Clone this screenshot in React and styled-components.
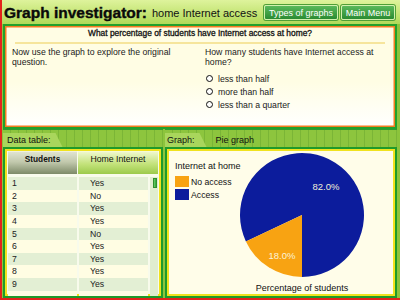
import styled, { createGlobalStyle } from "styled-components";

const GlobalStyle = createGlobalStyle`
  html, body { margin: 0; padding: 0; background: #fff; }
  body { font-family: "Liberation Sans", Arial, sans-serif; }
  * { box-sizing: border-box; }
`;

const FONT = `"Liberation Sans", Arial, sans-serif`;

const Frame = styled.div`
  width: 400px;
  height: 300px;
  display: flex;
  flex-direction: column;
  background: #8cc43c;
  border-left: 2px solid #e3241b;
  border-bottom: 2px solid #e3241b;
  overflow: hidden;
  font-family: ${FONT};
  color: #1a1a1a;
`;

const Header = styled.header`
  height: 24px;
  flex: none;
  display: flex;
  align-items: center;
  padding: 1px 5px 0 2px;
  background: linear-gradient(#def39c, #b1da58);
`;

const Title = styled.h1`
  margin: 0;
  font-size: 15.5px;
  font-weight: 700;
  color: #0a0a0a;
  white-space: nowrap;
  -webkit-text-stroke: 0.4px #0a0a0a;
`;

const Subtitle = styled.span`
  font-size: 11px;
  margin-left: 5px;
  color: #111;
  white-space: nowrap;
`;

const NavButtons = styled.nav`
  margin-left: auto;
  display: flex;
  gap: 3px;
`;

const NavButton = styled.button`
  width: ${(p) => p.$w}px;
  height: 15px;
  padding: 0;
  font-family: ${FONT};
  font-size: 9px;
  color: #fff;
  background: linear-gradient(#5ab85a, #2a8b32);
  border: 1px solid #d2f0ae;
  border-radius: 2px;
  box-shadow: 0 0 0 1px #4f9f36;
`;

const QuestionPanel = styled.section`
  flex: none;
  height: 105px;
  margin: 0 3px 0 1px;
  border: 2px solid #22a02c;
  box-shadow: inset 0 0 0 1.5px #f47c20;
  background: linear-gradient(#fffde4 55%, #ffffff);
`;

const QuestionTitle = styled.h2`
  margin: 0;
  padding-top: 1px;
  font-size: 8.4px;
  line-height: 12px;
  font-weight: 400;
  -webkit-text-stroke: 0.3px #111;
  text-align: center;
  color: #111;
`;

const Rule = styled.div`
  height: 2px;
  margin: 3px 10px 0;
  background: #f6e59c;
`;

const Columns = styled.div`
  display: grid;
  grid-template-columns: 1fr 1fr;
  gap: 10px;
  padding: 0 7px;
  margin-top: 3px;
  font-size: 8.7px;
  line-height: 10px;
`;

const Para = styled.p`
  margin: 0;
`;

const Options = styled.ul`
  list-style: none;
  margin: 5px 0 0;
  padding: 0 0 0 1px;
`;

const Option = styled.li`
  height: 13px;
  display: flex;
  align-items: center;
  gap: 5px;
`;

const Radio = styled.span`
  width: 7px;
  height: 7px;
  border-radius: 50%;
  border: 1.3px solid #111;
  background: #fff;
  flex: none;
`;

const Workspace = styled.div`
  flex: 1;
  min-height: 0;
  display: flex;
  gap: 2px;
  padding: 0 3px 0 1px;
`;

const Pane = styled.section`
  display: flex;
  flex-direction: column;
  ${(p) => (p.$width ? `width: ${p.$width}px; flex: none;` : "flex: 1;")}
`;

const TabStrip = styled.div`
  height: 18px;
  flex: none;
  display: flex;
  align-items: flex-end;
  border-top: 1px solid #2f9a2e;
  background:
    repeating-linear-gradient(90deg, transparent 0 7px, rgba(40, 110, 20, 0.18) 7px 8px),
    #8dc53e;
`;

const Tab = styled.div`
  height: 14px;
  line-height: 14px;
  padding: 0 12px 0 ${(p) => p.$pad}px;
  font-size: 9px;
  color: #111;
  background: #a9d65c;
  clip-path: polygon(0 0, calc(100% - 7px) 0, 100% 100%, 0 100%);
`;

const TabNote = styled.span`
  margin-left: 9px;
  line-height: 14px;
  font-size: 9px;
  color: #111;
`;

const Box = styled.div`
  flex: 1;
  min-height: 0;
  border: 2px solid #1f9a2a;
  box-shadow: inset 0 0 0 2px #f0e21e;
  padding: ${(p) => p.$pad};
  background: ${(p) => p.$bg};
  overflow: hidden;
`;

const TableHead = styled.div`
  display: grid;
  grid-template-columns: 69px 80px;
  gap: 1px;
  height: 23px;
`;

const HeadCell = styled.div`
  padding-top: 2px;
  text-align: center;
  font-size: ${(p) => (p.$active ? "8.3px" : "8.7px")};
  font-weight: ${(p) => (p.$active ? 700 : 400)};
  line-height: 10px;
  color: #111;
  border-top: 1px solid ${(p) => (p.$active ? "#eef0e0" : "#f4fad8")};
  background: ${(p) =>
    p.$active
      ? "linear-gradient(#dfe3d0 0%, #c2c9ad 45%, #7d8a68 100%)"
      : "linear-gradient(#eef7cc 0%, #c3e27a 55%, #9cca4c 100%)"};
`;

const TableBody = styled.div`
  display: flex;
  gap: 2px;
  margin-top: 3px;
`;

const Rows = styled.div`
  width: 140px;
`;

const Row = styled.div`
  display: grid;
  grid-template-columns: 69px 69px;
  gap: 2px;
  height: 12.65px;
  font-size: 8.7px;
  line-height: 12.65px;
  color: #222;
`;

const Cell = styled.div`
  padding-left: ${(p) => p.$indent}px;
  background: ${(p) => (p.$odd ? "#e3efd4" : "#fffde3")};
`;

const ScrollTrack = styled.div`
  width: 8px;
  height: 124px;
  background: #e0edcf;
  padding: 1px 1px 0 3px;
`;

const ScrollThumb = styled.div`
  height: 10px;
  background: linear-gradient(90deg, #6fd06a, #2ea338);
  border: 1px solid #2f8f2f;
`;

const GraphBody = styled.div`
  display: flex;
  height: 100%;
`;

const Legend = styled.div`
  width: 64px;
  margin-left: 6px;
  padding-top: 10px;
  flex: none;
`;

const LegendTitle = styled.div`
  font-size: 9px;
  line-height: 10px;
  color: #111;
  white-space: nowrap;
  margin-bottom: 4px;
`;

const LegendItem = styled.div`
  display: flex;
  align-items: center;
  gap: 2px;
  height: 13px;
  font-size: 8.7px;
  color: #111;
  white-space: nowrap;
`;

const Swatch = styled.span`
  width: 14px;
  height: 11px;
  background: ${(p) => p.$color};
  flex: none;
`;

const ChartColumn = styled.div`
  display: flex;
  flex-direction: column;
  align-items: center;
  width: 126px;
  padding-top: 1px;
`;

const Caption = styled.div`
  margin-top: 5px;
  font-size: 9px;
  line-height: 10px;
  color: #111;
  white-space: nowrap;
`;

const ORANGE = "#f8a312";
const BLUE = "#0c1c9c";

const data = ["Yes", "No", "Yes", "Yes", "No", "Yes", "Yes", "Yes", "Yes"];

function PieChart() {
  return (
    <svg width="126" height="126" viewBox="0 0 126 126">
      <path d="M63 63 L6.89 89.4 A62 62 0 1 1 63 125 Z" fill={BLUE} />
      <path d="M63 63 L63 125 A62 62 0 0 1 6.89 89.4 Z" fill={ORANGE} />
      <text x="87" y="38" fontSize="9.5" fill="#f2efd8" textAnchor="middle" fontFamily={FONT}>
        82.0%
      </text>
      <text x="43" y="107" fontSize="9.5" fill="#fbf3d8" textAnchor="middle" fontFamily={FONT}>
        18.0%
      </text>
    </svg>
  );
}

export default function App() {
  return (
    <>
      <GlobalStyle />
      <Frame>
        <Header>
          <Title>Graph investigator:</Title>
          <Subtitle>home Internet access</Subtitle>
          <NavButtons>
            <NavButton $w={74}>Types of graphs</NavButton>
            <NavButton $w={54}>Main Menu</NavButton>
          </NavButtons>
        </Header>

        <QuestionPanel>
          <QuestionTitle>What percentage of students have Internet access at home?</QuestionTitle>
          <Rule />
          <Columns>
            <Para>Now use the graph to explore the original question.</Para>
            <div>
              <Para>How many students have Internet access at home?</Para>
              <Options>
                {["less than half", "more than half", "less than a quarter"].map((o) => (
                  <Option key={o}>
                    <Radio />
                    {o}
                  </Option>
                ))}
              </Options>
            </div>
          </Columns>
        </QuestionPanel>

        <Workspace>
          <Pane $width={160}>
            <TabStrip>
              <Tab $pad={4}>Data table:</Tab>
            </TabStrip>
            <Box $pad="2px 1px 0 3px" $bg="#f8fbec">
              <TableHead>
                <HeadCell $active>Students</HeadCell>
                <HeadCell>Home Internet</HeadCell>
              </TableHead>
              <TableBody>
                <Rows>
                  {data.map((v, i) => (
                    <Row key={i}>
                      <Cell $odd={i % 2 === 0} $indent={4}>{i + 1}</Cell>
                      <Cell $odd={i % 2 === 0} $indent={11}>{v}</Cell>
                    </Row>
                  ))}
                  <Row>
                    <Cell $indent={4} />
                    <Cell $indent={11} />
                  </Row>
                </Rows>
                <ScrollTrack>
                  <ScrollThumb />
                </ScrollTrack>
              </TableBody>
            </Box>
          </Pane>

          <Pane>
            <TabStrip>
              <Tab $pad={2}>Graph:</Tab>
              <TabNote>Pie graph</TabNote>
            </TabStrip>
            <Box $pad="2px" $bg="#fffde9">
              <GraphBody>
                <Legend>
                  <LegendTitle>Internet at home</LegendTitle>
                  <LegendItem>
                    <Swatch $color={ORANGE} />
                    No access
                  </LegendItem>
                  <LegendItem>
                    <Swatch $color={BLUE} />
                    Access
                  </LegendItem>
                </Legend>
                <ChartColumn>
                  <PieChart />
                  <Caption>Percentage of students</Caption>
                </ChartColumn>
              </GraphBody>
            </Box>
          </Pane>
        </Workspace>
      </Frame>
    </>
  );
}
